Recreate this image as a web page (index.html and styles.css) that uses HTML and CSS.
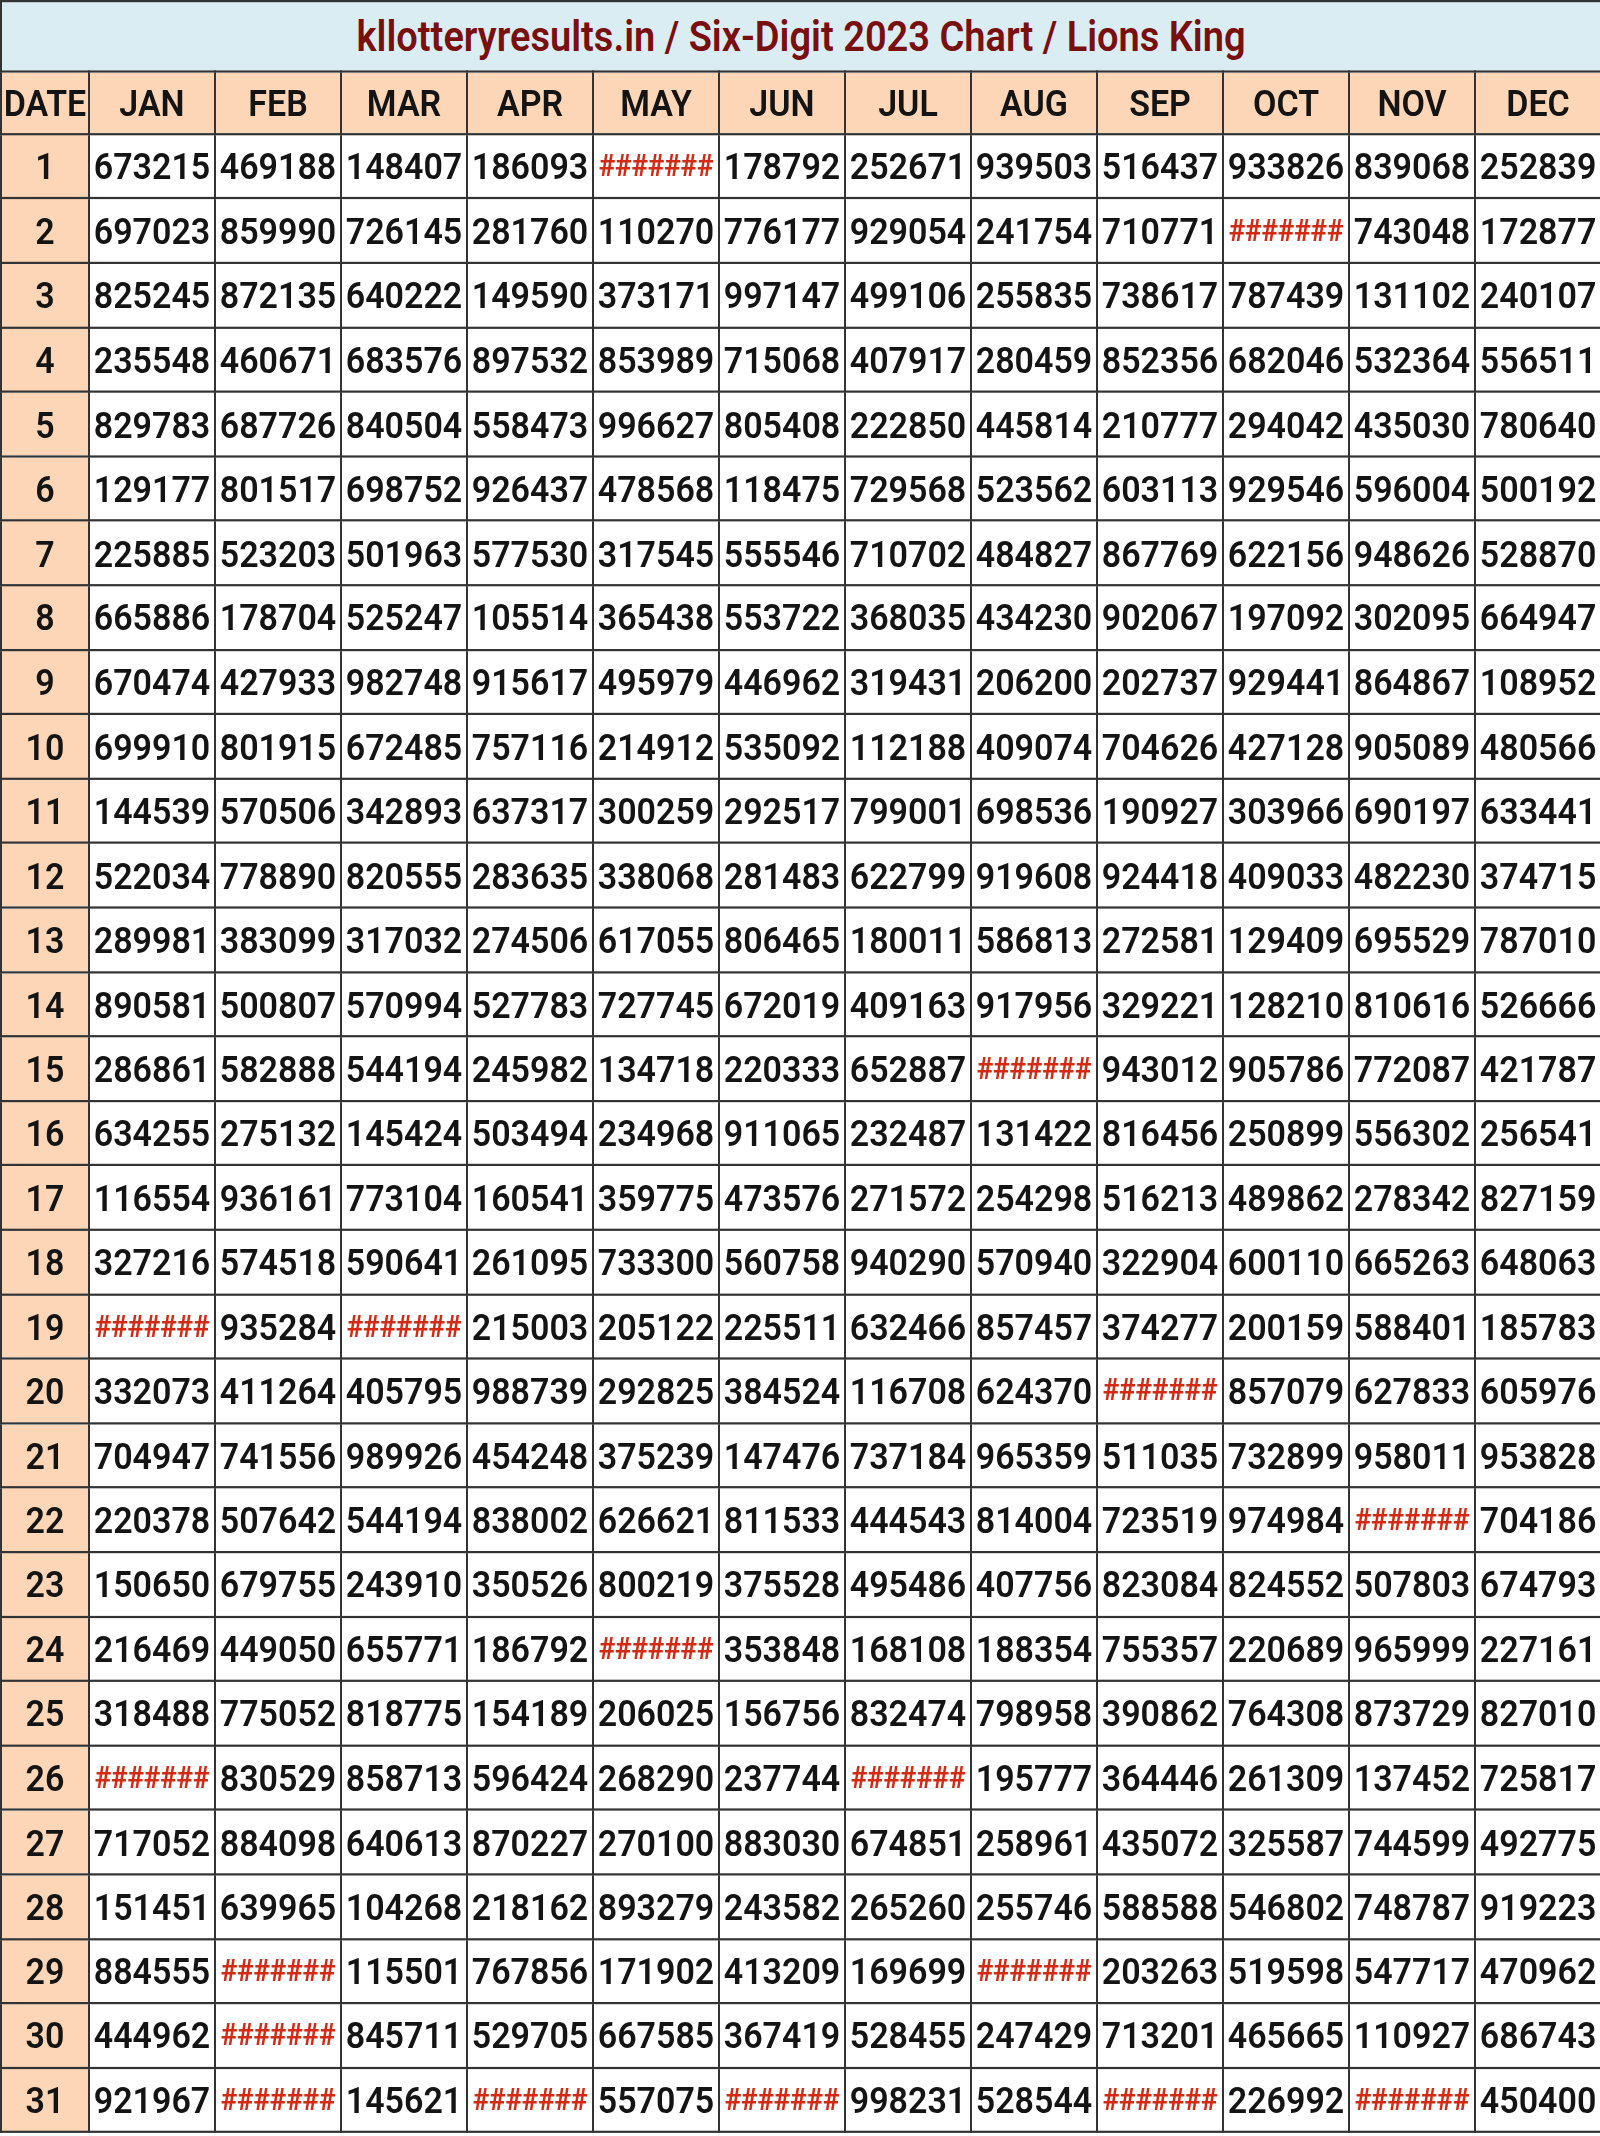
FILE: index.html
```html
<!DOCTYPE html>
<html>
<head>
<meta charset="utf-8">
<title>Six-Digit 2023 Chart</title>
<link rel="stylesheet" href="styles.css">
</head>
<body>
<div class="page">
<table class="chart">
<colgroup><col class="cdate"><col span="12" class="cmon"></colgroup>
<tr class="title"><th colspan="13">kllotteryresults.in / Six-Digit 2023 Chart / Lions King</th></tr>
<tr class="head"><th>DATE</th><th>JAN</th><th>FEB</th><th>MAR</th><th>APR</th><th>MAY</th><th>JUN</th><th>JUL</th><th>AUG</th><th>SEP</th><th>OCT</th><th>NOV</th><th>DEC</th></tr>
<tr><td class="d">1</td><td>673215</td><td>469188</td><td>148407</td><td>186093</td><td class="x">#######</td><td>178792</td><td>252671</td><td>939503</td><td>516437</td><td>933826</td><td>839068</td><td>252839</td></tr>
<tr><td class="d">2</td><td>697023</td><td>859990</td><td>726145</td><td>281760</td><td>110270</td><td>776177</td><td>929054</td><td>241754</td><td>710771</td><td class="x">#######</td><td>743048</td><td>172877</td></tr>
<tr><td class="d">3</td><td>825245</td><td>872135</td><td>640222</td><td>149590</td><td>373171</td><td>997147</td><td>499106</td><td>255835</td><td>738617</td><td>787439</td><td>131102</td><td>240107</td></tr>
<tr><td class="d">4</td><td>235548</td><td>460671</td><td>683576</td><td>897532</td><td>853989</td><td>715068</td><td>407917</td><td>280459</td><td>852356</td><td>682046</td><td>532364</td><td>556511</td></tr>
<tr><td class="d">5</td><td>829783</td><td>687726</td><td>840504</td><td>558473</td><td>996627</td><td>805408</td><td>222850</td><td>445814</td><td>210777</td><td>294042</td><td>435030</td><td>780640</td></tr>
<tr><td class="d">6</td><td>129177</td><td>801517</td><td>698752</td><td>926437</td><td>478568</td><td>118475</td><td>729568</td><td>523562</td><td>603113</td><td>929546</td><td>596004</td><td>500192</td></tr>
<tr><td class="d">7</td><td>225885</td><td>523203</td><td>501963</td><td>577530</td><td>317545</td><td>555546</td><td>710702</td><td>484827</td><td>867769</td><td>622156</td><td>948626</td><td>528870</td></tr>
<tr><td class="d">8</td><td>665886</td><td>178704</td><td>525247</td><td>105514</td><td>365438</td><td>553722</td><td>368035</td><td>434230</td><td>902067</td><td>197092</td><td>302095</td><td>664947</td></tr>
<tr><td class="d">9</td><td>670474</td><td>427933</td><td>982748</td><td>915617</td><td>495979</td><td>446962</td><td>319431</td><td>206200</td><td>202737</td><td>929441</td><td>864867</td><td>108952</td></tr>
<tr><td class="d">10</td><td>699910</td><td>801915</td><td>672485</td><td>757116</td><td>214912</td><td>535092</td><td>112188</td><td>409074</td><td>704626</td><td>427128</td><td>905089</td><td>480566</td></tr>
<tr><td class="d">11</td><td>144539</td><td>570506</td><td>342893</td><td>637317</td><td>300259</td><td>292517</td><td>799001</td><td>698536</td><td>190927</td><td>303966</td><td>690197</td><td>633441</td></tr>
<tr><td class="d">12</td><td>522034</td><td>778890</td><td>820555</td><td>283635</td><td>338068</td><td>281483</td><td>622799</td><td>919608</td><td>924418</td><td>409033</td><td>482230</td><td>374715</td></tr>
<tr><td class="d">13</td><td>289981</td><td>383099</td><td>317032</td><td>274506</td><td>617055</td><td>806465</td><td>180011</td><td>586813</td><td>272581</td><td>129409</td><td>695529</td><td>787010</td></tr>
<tr><td class="d">14</td><td>890581</td><td>500807</td><td>570994</td><td>527783</td><td>727745</td><td>672019</td><td>409163</td><td>917956</td><td>329221</td><td>128210</td><td>810616</td><td>526666</td></tr>
<tr><td class="d">15</td><td>286861</td><td>582888</td><td>544194</td><td>245982</td><td>134718</td><td>220333</td><td>652887</td><td class="x">#######</td><td>943012</td><td>905786</td><td>772087</td><td>421787</td></tr>
<tr><td class="d">16</td><td>634255</td><td>275132</td><td>145424</td><td>503494</td><td>234968</td><td>911065</td><td>232487</td><td>131422</td><td>816456</td><td>250899</td><td>556302</td><td>256541</td></tr>
<tr><td class="d">17</td><td>116554</td><td>936161</td><td>773104</td><td>160541</td><td>359775</td><td>473576</td><td>271572</td><td>254298</td><td>516213</td><td>489862</td><td>278342</td><td>827159</td></tr>
<tr><td class="d">18</td><td>327216</td><td>574518</td><td>590641</td><td>261095</td><td>733300</td><td>560758</td><td>940290</td><td>570940</td><td>322904</td><td>600110</td><td>665263</td><td>648063</td></tr>
<tr><td class="d">19</td><td class="x">#######</td><td>935284</td><td class="x">#######</td><td>215003</td><td>205122</td><td>225511</td><td>632466</td><td>857457</td><td>374277</td><td>200159</td><td>588401</td><td>185783</td></tr>
<tr><td class="d">20</td><td>332073</td><td>411264</td><td>405795</td><td>988739</td><td>292825</td><td>384524</td><td>116708</td><td>624370</td><td class="x">#######</td><td>857079</td><td>627833</td><td>605976</td></tr>
<tr><td class="d">21</td><td>704947</td><td>741556</td><td>989926</td><td>454248</td><td>375239</td><td>147476</td><td>737184</td><td>965359</td><td>511035</td><td>732899</td><td>958011</td><td>953828</td></tr>
<tr><td class="d">22</td><td>220378</td><td>507642</td><td>544194</td><td>838002</td><td>626621</td><td>811533</td><td>444543</td><td>814004</td><td>723519</td><td>974984</td><td class="x">#######</td><td>704186</td></tr>
<tr><td class="d">23</td><td>150650</td><td>679755</td><td>243910</td><td>350526</td><td>800219</td><td>375528</td><td>495486</td><td>407756</td><td>823084</td><td>824552</td><td>507803</td><td>674793</td></tr>
<tr><td class="d">24</td><td>216469</td><td>449050</td><td>655771</td><td>186792</td><td class="x">#######</td><td>353848</td><td>168108</td><td>188354</td><td>755357</td><td>220689</td><td>965999</td><td>227161</td></tr>
<tr><td class="d">25</td><td>318488</td><td>775052</td><td>818775</td><td>154189</td><td>206025</td><td>156756</td><td>832474</td><td>798958</td><td>390862</td><td>764308</td><td>873729</td><td>827010</td></tr>
<tr><td class="d">26</td><td class="x">#######</td><td>830529</td><td>858713</td><td>596424</td><td>268290</td><td>237744</td><td class="x">#######</td><td>195777</td><td>364446</td><td>261309</td><td>137452</td><td>725817</td></tr>
<tr><td class="d">27</td><td>717052</td><td>884098</td><td>640613</td><td>870227</td><td>270100</td><td>883030</td><td>674851</td><td>258961</td><td>435072</td><td>325587</td><td>744599</td><td>492775</td></tr>
<tr><td class="d">28</td><td>151451</td><td>639965</td><td>104268</td><td>218162</td><td>893279</td><td>243582</td><td>265260</td><td>255746</td><td>588588</td><td>546802</td><td>748787</td><td>919223</td></tr>
<tr><td class="d">29</td><td>884555</td><td class="x">#######</td><td>115501</td><td>767856</td><td>171902</td><td>413209</td><td>169699</td><td class="x">#######</td><td>203263</td><td>519598</td><td>547717</td><td>470962</td></tr>
<tr><td class="d">30</td><td>444962</td><td class="x">#######</td><td>845711</td><td>529705</td><td>667585</td><td>367419</td><td>528455</td><td>247429</td><td>713201</td><td>465665</td><td>110927</td><td>686743</td></tr>
<tr><td class="d">31</td><td>921967</td><td class="x">#######</td><td>145621</td><td class="x">#######</td><td>557075</td><td class="x">#######</td><td>998231</td><td>528544</td><td class="x">#######</td><td>226992</td><td class="x">#######</td><td>450400</td></tr>
</table>
</div>
</body>
</html>
```

FILE: styles.css
```css
html, body {
  margin: 0;
  padding: 0;
  background: #ffffff;
}

body {
  font-family: Roboto, "Liberation Sans", Arial, sans-serif;
}

.page {
  width: 1600px;
  min-height: 2136px;
}

/* The chart glyphs are slightly taller than wide in the original, so the
   whole table is stretched vertically; row heights are set before scaling. */
.chart {
  border-collapse: collapse;
  table-layout: fixed;
  width: 1600px;
  transform: scaleY(1.1);
  transform-origin: 0 0;
}

.cdate {
  width: 88px;
}

.cmon {
  width: 126px;
}

.chart th,
.chart td {
  border: 2px solid #333333;
  padding: 0;
  text-align: center;
  vertical-align: middle;
  font-size: 34px;
  font-weight: 600;
  color: #141414;
  white-space: nowrap;
  overflow: hidden;
  line-height: 1;
}

.chart td {
  height: 56.6px;
  background: #ffffff;
}

.title th {
  height: 61.6px;
  background: #daedf3;
  color: #7a0f0f;
  font-size: 38px;
  font-weight: 600;
}

.head th {
  height: 55.3px;
  background: #fcd6b6;
}

.chart td.d {
  background: #fcd6b6;
}

.chart td.x {
  color: #d42a14;
  font-weight: 700;
  font-size: 28px;
  letter-spacing: -0.2px;
}
```
